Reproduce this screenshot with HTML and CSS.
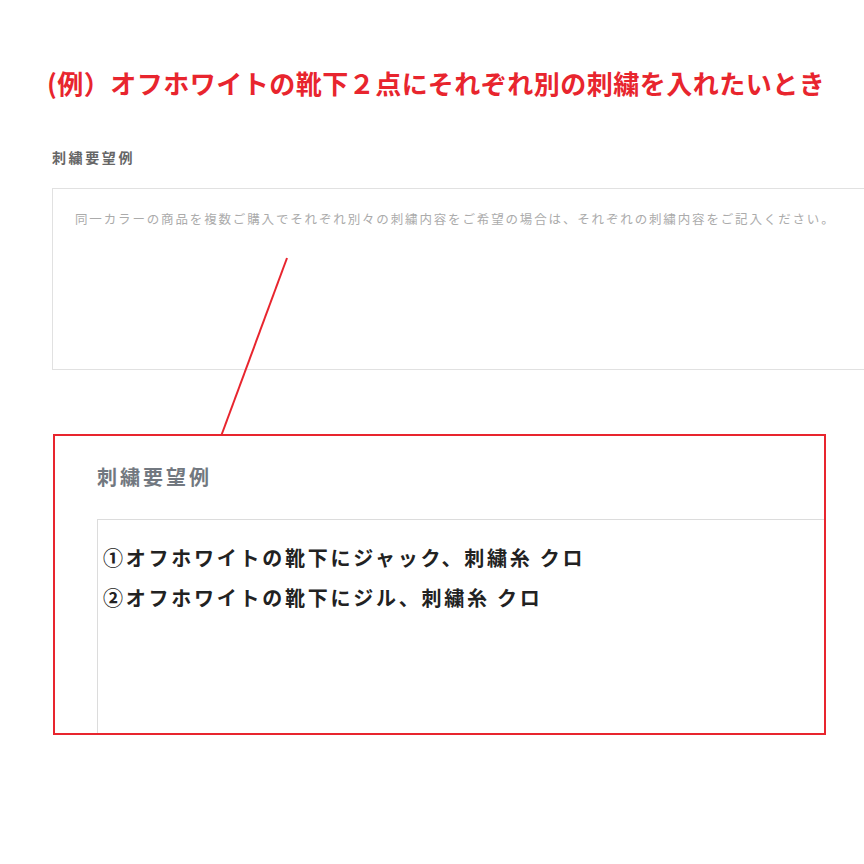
FILE: index.html
```html
<!DOCTYPE html>
<html lang="ja">
<head>
    <meta charset="UTF-8">
    <meta name="viewport" content="width=device-width, initial-scale=1.0">
    <title>刺繍要望例</title>
    <link rel="stylesheet" href="styles.css">
</head>
<body>
    <div class="page">
        <h1 class="page-title">(例）オフホワイトの靴下２点にそれぞれ別の刺繍を入れたいとき</h1>

        <div class="form-group">
            <p class="field-label">刺繍要望例</p>
            <div class="field-box">
                <p class="placeholder">同一カラーの商品を複数ご購入でそれぞれ別々の刺繍内容をご希望の場合は、それぞれの刺繍内容をご記入ください。</p>
            </div>
        </div>

        <div class="zoom-box">
            <p class="zoom-label">刺繍要望例</p>
            <div class="zoom-field">
                <p class="zoom-line">①オフホワイトの靴下にジャック、刺繍糸 クロ</p>
                <p class="zoom-line">②オフホワイトの靴下にジル、刺繍糸 クロ</p>
            </div>
        </div>

        <svg class="pointer" width="864" height="864" viewBox="0 0 864 864">
            <line x1="287" y1="258" x2="221.5" y2="435" stroke="#e8252e" stroke-width="2"/>
        </svg>
    </div>
</body>
</html>
```

FILE: styles.css
```css
* {
    margin: 0;
    padding: 0;
    box-sizing: border-box;
    font-family: 'Noto Sans CJK JP', 'Noto Sans', sans-serif;
}

:root {
    --red: #e8252e;
    --text: #222222;
    --border: #e1e1e1;
}

html, body {
    background: #ffffff;
    overflow: hidden;
}

.page {
    position: relative;
    width: 864px;
    height: 864px;
    padding: 70px 0 0 0;
}

.page-title {
    margin-left: 47px;
    font-size: 26px;
    line-height: 26px;
    font-weight: 700;
    letter-spacing: 0.5px;
    color: var(--red);
    white-space: nowrap;
}

.form-group {
    margin: 54px 0 0 52px;
}

.field-label {
    font-size: 14px;
    line-height: 14px;
    font-weight: 700;
    letter-spacing: 2.6px;
    color: #666666;
}

.field-box {
    margin-top: 24px;
    width: 860px;
    height: 182px;
    border: 1px solid var(--border);
    padding: 23px 0 0 22px;
}

.placeholder {
    font-size: 12.5px;
    line-height: 13px;
    letter-spacing: 1.85px;
    color: #ababab;
    white-space: nowrap;
}

.zoom-box {
    margin: 64px 0 0 53px;
    width: 773px;
    height: 301px;
    border: 2px solid var(--red);
    padding: 31px 0 0 42px;
    overflow: hidden;
}

.zoom-label {
    font-size: 20px;
    line-height: 20px;
    font-weight: 700;
    letter-spacing: 3px;
    color: #727880;
}

.zoom-field {
    margin-top: 32px;
    width: 760px;
    height: 300px;
    border: 1px solid #dcdcdc;
    padding: 18px 0 0 5px;
}

.zoom-line {
    font-size: 20px;
    line-height: 40px;
    font-weight: 700;
    letter-spacing: 2.75px;
    color: var(--text);
    white-space: nowrap;
}

.pointer {
    position: absolute;
    top: 0;
    left: 0;
    pointer-events: none;
}
```
